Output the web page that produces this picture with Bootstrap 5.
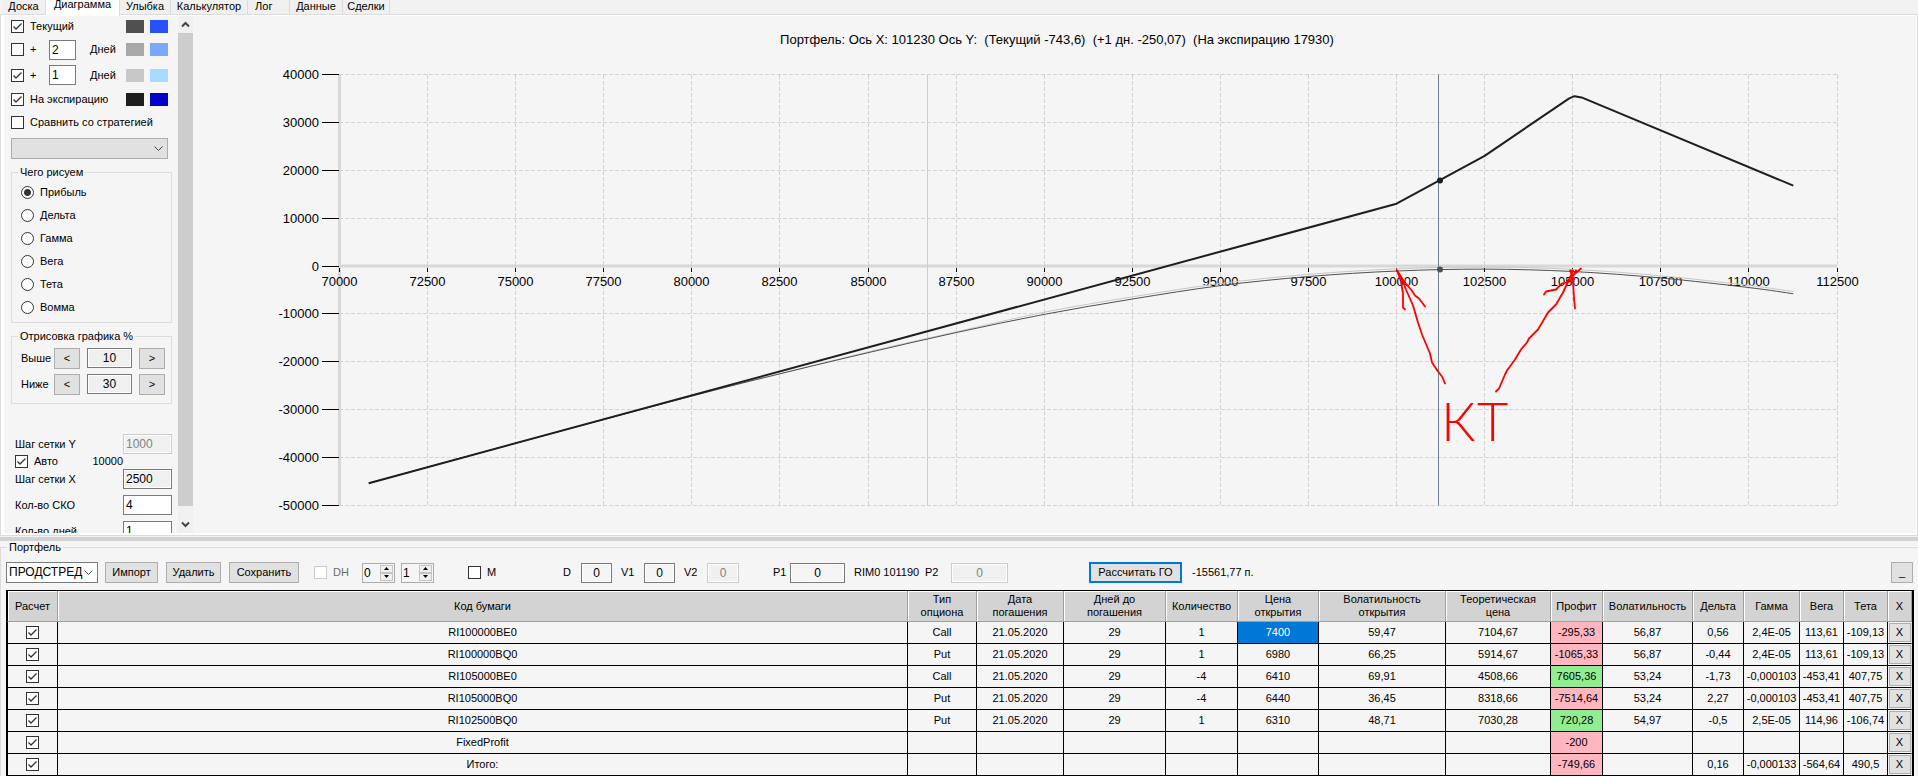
<!DOCTYPE html>
<html lang="ru">
<head>
<meta charset="utf-8">
<meta name="viewport" content="width=device-width, initial-scale=1">
<title>Портфель</title>
<link href="https://cdn.jsdelivr.net/npm/bootstrap@5.3.0/dist/css/bootstrap.min.css" rel="stylesheet">
<style>
:root{--face:#f5f5f5;--line:#dcdcdc;--btn:#e1e1e1;--edge:#adadad;--dark:#7a7a7a}
body{font:11px/13px "Liberation Sans",Arial,sans-serif;color:#000;background:var(--face);height:100vh;overflow:hidden}
.tabstrip{height:14px;padding-left:2px;background:#f2f2f2}
.tabstrip .nav-link{height:14px;padding:0;line-height:12px;color:#000;text-align:center;border:0;border-right:1px solid var(--line);border-radius:0;background:#f0f0f0;white-space:nowrap}
.tabstrip .nav-link.active{height:16px;margin-bottom:-2px;line-height:9px;background:#fff;position:relative;z-index:1}
.workspace{border:1px solid var(--line);background:#fff;padding:1px 1px 2px 3px;min-height:0}
.side{width:174px;padding:0 6px 0 7px;background:var(--face);overflow:hidden}
.bar{width:15px;background:#f0f0f0}
.bar button{height:17px;border:0;padding:0;background:none;line-height:0}
.thumb{background:#cdcdcd;margin-bottom:10px}
.chart{background:var(--face);min-width:0}
.chart svg{display:block;width:100%;height:100%}
.chart text{font-size:13px}
.opt{gap:6px;margin-right:4px}
.h20{height:20px}.h24{height:24px}.h27{height:27px}.h23{height:23px}.h26{height:26px}.h15{height:15px}
input.tick{appearance:none;flex:none;width:13px;height:13px;margin:0;border:1px solid #333;background:#fff center/11px no-repeat}
input.tick:checked{background-image:url("data:image/svg+xml,%3Csvg xmlns='http://www.w3.org/2000/svg' viewBox='0 0 11 11'%3E%3Cpath d='M1.5 5.5 4 8 9.5 2.5' fill='none' stroke='%23333' stroke-width='1.3'/%3E%3C/svg%3E")}
input.tick:disabled{border-color:#ccc}
input.dot{appearance:none;width:13px;height:13px;margin:0;border:1px solid #333;border-radius:50%;background:#fff}
input.dot:checked{background:radial-gradient(circle,#333 0 3px,#fff 4px)}
.box{border:1px solid var(--dark);border-radius:0;background:#fff;padding:0 2px;height:20px;min-width:0;color:#000;font-size:12px}
.box.ro{background:#f0f0f0;box-shadow:inset 0 0 0 1px #fff}
.box.pale{background:var(--face);box-shadow:inset 0 0 0 1px #fff}
.box:disabled{border-color:#ccc;color:#838383;background:#f0f0f0;box-shadow:inset 0 0 0 1px #fff}
.key{border:1px solid var(--edge);border-radius:0;background:var(--btn);padding:0;color:#000;font-size:11px;line-height:13px;height:21px}
.key.focus{border:2px solid #0078d7}
.pick{appearance:none;height:21px;border:1px solid var(--edge);border-radius:0;color:#000;padding:0 2px;background:var(--btn) right 4px center/9px no-repeat url("data:image/svg+xml,%3Csvg xmlns='http://www.w3.org/2000/svg' viewBox='0 0 9 9'%3E%3Cpath d='M.5 2.5 4.500 6.500 8.500 2.500' fill='none' stroke='%23444'/%3E%3C/svg%3E")}
.pick.lit{background-color:#fff;border-color:var(--dark);font-size:12px}
.swatch{width:18px;height:13px}
fieldset.frame{border:1px solid var(--line)}
fieldset.frame>legend{float:none;width:auto;margin:0 0 0 6px;padding:0 2px;font-size:11px;line-height:12px}
.side fieldset.frame{margin-top:7px}
.radios{padding:3px 0}
.radios .opt{margin-left:9px}
.ranges{padding:3px 0 6px}
.ranges .grid,.params{display:grid;align-items:center}
.ranges .grid{grid-template-columns:33px 26px 7px 45px 7px 26px;margin-left:9px}
.params{grid-template-columns:1fr 49px;padding-left:4px}
.gap6{margin-top:6px}
.splitter{height:4px;background:#d2d2d2;margin-top:1px}
fieldset.portfolio{border-right:0;border-bottom:0;padding:0 4px 0 5px}
fieldset.portfolio>legend{margin-left:1px}
.tools{display:grid;align-items:center;height:21px;margin:9px 0 7px;white-space:nowrap;
grid-template-columns:99px 61px 63px 85px 48px 39px 67px 95px 18px 40px 23px 40px 23px 66px 17px 64px 71px 26px 138px 103px 1fr 23px}
.spin{width:33px;height:20px;border:1px solid var(--edge);padding:1px}
.spin input{width:16px;border:0;padding:0;background:none;appearance:textfield;font-size:12px;line-height:16px}
.spin input::-webkit-inner-spin-button{display:none}
.spin .btns{width:13px}
.spin button{height:8px;border:1px solid #c4c4c4;padding:0;background:#f0f0f0;line-height:0}
.spin svg,.bar svg{display:block;margin:auto}
table.book{width:100%;table-layout:fixed;border-collapse:separate;border-spacing:0;border:solid #000;border-width:1px 2px 0 1px;text-align:center;white-space:nowrap}
.book th{height:31px;padding:0;font-weight:400;background:#d3d3d3;border-right:1px solid #a0a0a0;border-bottom:1px solid #a0a0a0;box-shadow:inset 1px 1px #fff;vertical-align:middle}
.book td{height:22px;padding:0;border-right:1px solid #000;border-bottom:1px solid #000;vertical-align:middle}
.book th:first-child,.book td:first-child{border-left:1px solid #000}
.book td:last-child{border-right-color:var(--line)}
.book input,.book button{display:block;margin:auto}
.book .key{width:22px;height:19px}
.loss{background:#ffb6c1}.gain{background:#90ee90}.sel{background:#0078d7;color:#fff}
</style>
</head>
<body class="d-flex flex-column">
<nav class="tabstrip nav flex-nowrap flex-shrink-0">
<a class="nav-link" style="width:44px" href="#">Доска</a>
<a class="nav-link active" style="width:74px" href="#">Диаграмма</a>
<a class="nav-link" style="width:51px" href="#">Улыбка</a>
<a class="nav-link" style="width:77px" href="#">Калькулятор</a>
<a class="nav-link text-start ps-1" style="width:42px" href="#">&nbsp;Лог</a>
<a class="nav-link" style="width:53px" href="#">Данные</a>
<a class="nav-link" style="width:47px" href="#">Сделки</a>
</nav>
<main class="workspace d-flex flex-grow-1">
<aside class="side d-flex flex-column flex-shrink-0">
<div class="opt d-flex align-items-center flex-shrink-0 h20"><input class="tick" type="checkbox" id="c1" checked><label for="c1" class="flex-grow-1">Текущий</label><span class="swatch" style="background:#505050"></span><span class="swatch" style="background:#2850ff"></span></div>
<div class="opt d-flex align-items-center flex-shrink-0 h27"><input class="tick" type="checkbox" id="c2"><label for="c2" style="width:13px">+</label><input class="box" style="width:27px" value="2" aria-label="Дни 2"><span class="ms-2 flex-grow-1">Дней</span><span class="swatch" style="background:#a8a8a8"></span><span class="swatch" style="background:#78a8ff"></span></div>
<div class="opt d-flex align-items-center flex-shrink-0 h24"><input class="tick" type="checkbox" id="c3" checked><label for="c3" style="width:13px">+</label><input class="box" style="width:27px" value="1" aria-label="Дни 1"><span class="ms-2 flex-grow-1">Дней</span><span class="swatch" style="background:#c8c8c8"></span><span class="swatch" style="background:#a8dcff"></span></div>
<div class="opt d-flex align-items-center flex-shrink-0 h24"><input class="tick" type="checkbox" id="c4" checked><label for="c4" class="flex-grow-1">На экспирацию</label><span class="swatch" style="background:#1e1e1e"></span><span class="swatch" style="background:#0000c8"></span></div>
<div class="opt d-flex align-items-center flex-shrink-0 h23"><input class="tick" type="checkbox" id="c5"><label for="c5" class="text-nowrap">Сравнить со стратегией</label></div>
<select class="pick mt-1 me-1 flex-shrink-0" aria-label="Стратегия"><option></option></select>
<fieldset class="frame radios flex-shrink-0"><legend>Чего рисуем</legend>
<div class="opt d-flex align-items-center h23"><input class="dot" type="radio" name="g" id="r1" checked><label for="r1">Прибыль</label></div>
<div class="opt d-flex align-items-center h23"><input class="dot" type="radio" name="g" id="r2"><label for="r2">Дельта</label></div>
<div class="opt d-flex align-items-center h23"><input class="dot" type="radio" name="g" id="r3"><label for="r3">Гамма</label></div>
<div class="opt d-flex align-items-center h23"><input class="dot" type="radio" name="g" id="r4"><label for="r4">Вега</label></div>
<div class="opt d-flex align-items-center h23"><input class="dot" type="radio" name="g" id="r5"><label for="r5">Тета</label></div>
<div class="opt d-flex align-items-center h23"><input class="dot" type="radio" name="g" id="r6"><label for="r6">Вомма</label></div>
</fieldset>
<fieldset class="frame ranges flex-shrink-0"><legend>Отрисовка графика %</legend>
<div class="grid h26"><label for="up">Выше</label><button class="key">&lt;</button><i></i><input id="up" class="box ro text-center" value="10"><i></i><button class="key">&gt;</button></div>
<div class="grid h26"><label for="dn">Ниже</label><button class="key">&lt;</button><i></i><input id="dn" class="box ro text-center" value="30"><i></i><button class="key">&gt;</button></div>
</fieldset>
<div class="params flex-shrink-0 h20" style="margin-top:30px"><label for="sy">Шаг сетки Y</label><input id="sy" class="box" value="1000" disabled></div>
<div class="d-flex align-items-center flex-shrink-0 h15 ps-1 opt"><input class="tick" type="checkbox" id="au" checked><label for="au">Авто</label><span class="ms-auto" style="margin-right:45px">10000</span></div>
<div class="params flex-shrink-0 h20"><label for="sx">Шаг сетки X</label><input id="sx" class="box ro" value="2500"></div>
<div class="params flex-shrink-0 h20 gap6"><label for="sk">Кол-во СКО</label><input id="sk" class="box" value="4"></div>
<div class="params flex-shrink-0 h20 gap6"><label for="dd">Кол-во дней</label><input id="dd" class="box" value="1"></div>
</aside>
<div class="bar d-flex flex-column flex-shrink-0">
<button aria-label="Вверх"><svg width="9" height="7"><path d="M1 5.500 4.500 2 8 5.500" fill="none" stroke="#444" stroke-width="2"/></svg></button>
<div class="thumb flex-grow-1"></div>
<button aria-label="Вниз"><svg width="9" height="7"><path d="M1 1.500 4.500 5 8 1.500" fill="none" stroke="#444" stroke-width="2"/></svg></button>
</div>
<section class="chart flex-grow-1">
<svg id="plot" viewBox="193 16 1723 516" font-family="Liberation Sans, Arial, sans-serif">
<text id="ttl" x="1057" y="43" text-anchor="middle" xml:space="preserve">Портфель: Ось X: 101230 Ось Y: &#160;(Текущий -743,6) &#160;(+1 дн. -250,07) &#160;(На экспирацию 17930)</text>
<g id="grid" stroke="#d3d3d3" stroke-dasharray="4 2" shape-rendering="crispEdges"></g>
<path d="M339.500 74V505M339 265.500H1837" stroke="#d8d8d8" stroke-width="3" fill="none"/>
<g id="marks" stroke="#000" shape-rendering="crispEdges"></g>
<path d="M927.500 74V505" stroke="#ffb6c1"/>
<path d="M1438.500 74V505" stroke="#708090"/>
<g id="labels"></g>
<g id="curves" fill="none"></g>
<circle cx="1440" cy="180" r="3" fill="#1e1e1e"/><circle cx="1440" cy="269" r="3" fill="#505050"/>
<g fill="none" stroke="#f00" stroke-width="1.800" stroke-linecap="round" stroke-linejoin="round">
<path d="M1397 270 1402 279 1406 289 1413 305 1418 322 1422 334 1430 353 1432 362 1438 371 1442 376 1445 383"/>
<path d="M1397 270 1401 281 1403 293 1403 307 1405 309M1397 270 1404 281 1411 289 1415 295 1419 298 1425 306"/>
<path d="M1496 391 1499 388 1505 374 1507 370 1515 359 1521 349 1527 342 1529 338 1538 329 1548 312 1556 304 1563 292 1569 279 1573 270"/>
<path d="M1544 294 1546 291 1556 289 1562 283 1570 281 1574 274 1581 268M1571 270 1573 281 1574 298 1575 308M1570 270 1574 279M1576 270 1570 281"/>
</g>
<g fill="#f00" font-family="Lato, sans-serif" font-weight="300"><text x="1441" y="440" style="font-size:54px">К</text><text x="1477" y="440" style="font-size:54px">Т</text></g>
</svg>
</section>
</main>
<div class="splitter flex-shrink-0"></div>
<fieldset class="frame portfolio flex-shrink-0"><legend>Портфель</legend>
<div class="tools">
<select class="pick lit" style="width:92px" aria-label="Портфель"><option>ПРОДСТРЕД</option></select>
<button class="key" style="width:53px">Импорт</button>
<button class="key" style="width:55px">Удалить</button>
<button class="key" style="width:70px">Сохранить</button>
<span class="d-flex align-items-center opt" style="color:#6d6d6d"><input class="tick" type="checkbox" id="dh" disabled><label for="dh">DH</label></span>
<span class="spin d-flex"><input type="number" value="0" aria-label="DH 1"><span class="btns d-flex flex-column"><button aria-label="+"><svg width="5" height="3"><path d="M0 3 2.500 0 5 3z"/></svg></button><button aria-label="-"><svg width="5" height="3"><path d="M0 0 2.500 3 5 0z"/></svg></button></span></span>
<span class="spin d-flex"><input type="number" value="1" aria-label="DH 2"><span class="btns d-flex flex-column"><button aria-label="+"><svg width="5" height="3"><path d="M0 3 2.500 0 5 3z"/></svg></button><button aria-label="-"><svg width="5" height="3"><path d="M0 0 2.500 3 5 0z"/></svg></button></span></span>
<span class="d-flex align-items-center opt"><input class="tick" type="checkbox" id="mm"><label for="mm">M</label></span>
<label for="d">D</label><input id="d" class="box pale text-center" style="width:31px" value="0">
<label for="v1">V1</label><input id="v1" class="box pale text-center" style="width:31px" value="0">
<label for="v2">V2</label><input id="v2" class="box pale text-center" style="width:32px" value="0" disabled>
<label for="p1">P1</label><input id="p1" class="box pale text-center" style="width:55px" value="0">
<span>RIM0 101190</span>
<label for="p2">P2</label><input id="p2" class="box pale text-center" style="width:57px" value="0" disabled>
<button class="key focus" style="width:93px">Рассчитать ГО</button>
<span>-15561,77 п.</span>
<button class="key" style="width:22px" aria-label="Свернуть">_</button>
</div>
<table class="book">
<colgroup id="cols"></colgroup>
<thead><tr><th>Расчет</th><th>Код бумаги</th><th>Тип<br>опциона</th><th>Дата<br>погашения</th><th>Дней до<br>погашения</th><th>Количество</th><th>Цена<br>открытия</th><th>Волатильность<br>открытия</th><th>Теоретическая<br>цена</th><th>Профит</th><th>Волатильность</th><th>Дельта</th><th>Гамма</th><th>Вега</th><th>Тета</th><th>X</th></tr></thead>
<tbody id="rows"></tbody>
</table>
</fieldset>
<script src="https://cdn.jsdelivr.net/npm/bootstrap@5.3.0/dist/js/bootstrap.bundle.min.js"></script>
<script>
// portfolio table
const widths=[51,0,69,87,102,72,81,127,105,52,90,51,56,44,44,24];
cols.innerHTML=widths.map(w=>w?`<col style="width:${w}px">`:'<col>').join('');
const data=[
'RI100000BE0|Call|21.05.2020|29|1|7400|59,47|7104,67|-295,33|56,87|0,56|2,4E-05|113,61|-109,13',
'RI100000BQ0|Put|21.05.2020|29|1|6980|66,25|5914,67|-1065,33|56,87|-0,44|2,4E-05|113,61|-109,13',
'RI105000BE0|Call|21.05.2020|29|-4|6410|69,91|4508,66|7605,36|53,24|-1,73|-0,000103|-453,41|407,75',
'RI105000BQ0|Put|21.05.2020|29|-4|6440|36,45|8318,66|-7514,64|53,24|2,27|-0,000103|-453,41|407,75',
'RI102500BQ0|Put|21.05.2020|29|1|6310|48,71|7030,28|720,28|54,97|-0,5|2,5E-05|114,96|-106,74',
'FixedProfit||||||||-200|||||',
'Итого:||||||||-749,66||0,16|-0,000133|-564,64|490,5'];
rows.innerHTML=data.map((r,i)=>'<tr><td><input class="tick" type="checkbox" checked aria-label="Расчет"></td>'+
 r.split('|').map((t,j)=>`<td class="${j==8?(t[0]=='-'?'loss':'gain'):(i==0&&j==5?'sel':'')}">${t}</td>`).join('')+
 '<td><button class="key">X</button></td></tr>').join('');
// chart
const X=v=>339.5+(v-70000)*1497.5/42500, Y=v=>265.5-v*47.9/10000;
let g='',m='',l='';
for(let v=70000;v<=112500;v+=2500){const x=Math.floor(X(v))+.5;
 if(v>70000)g+=`<path d="M${x} 74V505"/>`;
 m+=`<path d="M${x} 267V271"/>`;
 l+=`<text x="${x}" y="285" text-anchor="middle">${v}</text>`}
for(let v=-50000;v<=40000;v+=10000){const y=Math.floor(Y(v)-.5)+.5;
 if(v)g+=`<path d="M339 ${y}H1837"/>`;
 m+=`<path d="M322 ${y}H339"/>`;
 l+=`<text x="319" y="${y+4.5}" text-anchor="end">${v}</text>`}
grid.innerHTML=g;marks.innerHTML=m;labels.innerHTML=l;
const smooth=p=>{p=p.map(([a,b])=>[X(a),Y(b)]);let d='M'+p[0];
 for(let i=0;i<p.length-1;i++){const a=p[i-1]||p[i],b=p[i],c=p[i+1],e=p[i+2]||c;
 d+=`C${b[0]+(c[0]-a[0])/6} ${b[1]+(c[1]-a[1])/6} ${c[0]-(e[0]-b[0])/6} ${c[1]-(e[1]-b[1])/6} ${c}`}return d};
const now=[[70830,-45340],[75000,-37000],[80000,-27150],[82500,-22500],[85000,-18100],[87500,-13900],[90000,-10100],[92500,-6900],[95000,-4100],[97500,-2200],[100000,-1050],[102500,-650],[105000,-1150],[107500,-2500],[110000,-4500],[111260,-5800]];
const next=now.map(([a,b])=>[a,a<84000?b:b+(a<90000?150:450)]);
const exp=[[70830,-45340],[100000,13000],[102500,23000],[104900,35000],[105050,35450],[105250,35200],[111260,16770]];
curves.innerHTML=`<path d="${smooth(next)}" stroke="#c8c8c8"/><path d="${smooth(now)}" stroke="#505050"/><path d="M${exp.map(([a,b])=>X(a)+' '+Y(b)).join('L')}" stroke="#1e1e1e" stroke-width="2" stroke-linejoin="round"/>`;
</script>
</body>
</html>
